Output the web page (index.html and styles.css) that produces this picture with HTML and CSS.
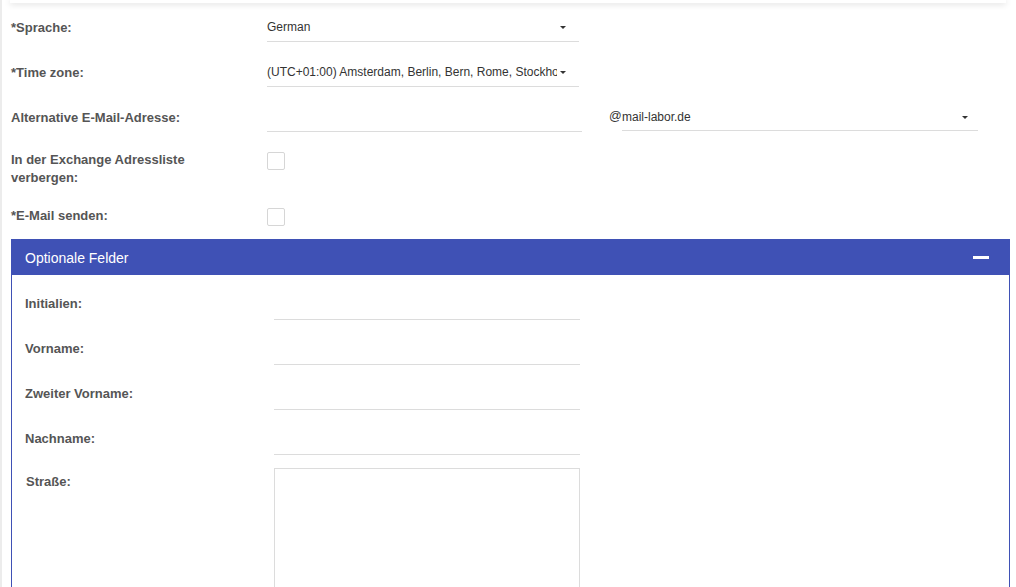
FILE: index.html
```html
<!DOCTYPE html>
<html lang="de">
<head>
<meta charset="utf-8">
<title>Benutzer</title>
<link rel="stylesheet" href="styles.css">
</head>
<body>
<div class="page">
  <div class="topcard"></div>
  <div class="form">
    <div class="row row-first">
      <label class="lbl">*Sprache:</label>
      <div class="select w312"><span class="val">German</span><span class="caret"></span></div>
    </div>
    <div class="row">
      <label class="lbl">*Time zone:</label>
      <div class="select w312"><span class="val">(UTC+01:00) Amsterdam, Berlin, Bern, Rome, Stockholm, Vienna</span><span class="caret"></span></div>
    </div>
    <div class="row">
      <label class="lbl">Alternative E-Mail-Adresse:</label>
      <div class="input w315"></div>
      <span class="at">@</span>
      <div class="select w356 sel-domain"><span class="val">mail-labor.de</span><span class="caret"></span></div>
    </div>
    <div class="row row-check row-exchange">
      <label class="lbl lbl-multi"><span class="wrap">In der Exchange Adressliste verbergen:</span></label>
      <span class="check"></span>
    </div>
    <div class="row row-check row-mail">
      <label class="lbl lbl-multi">*E-Mail senden:</label>
      <span class="check"></span>
    </div>
  </div>
  <section class="panel">
    <div class="panel-head">
      <span class="panel-title">Optionale Felder</span>
      <span class="minus"></span>
    </div>
    <div class="panel-body">
      <div class="prow">
        <label class="plbl">Initialien:</label>
        <div class="input w306"></div>
      </div>
      <div class="prow">
        <label class="plbl">Vorname:</label>
        <div class="input w306"></div>
      </div>
      <div class="prow">
        <label class="plbl">Zweiter Vorname:</label>
        <div class="input w306"></div>
      </div>
      <div class="prow">
        <label class="plbl">Nachname:</label>
        <div class="input w306"></div>
      </div>
      <div class="prow prow-area">
        <label class="plbl plbl-area">Straße:</label>
        <div class="textarea w306"></div>
      </div>
    </div>
  </section>
</div>
</body>
</html>
```

FILE: styles.css
```css
* { box-sizing: border-box; }
html, body {
  margin: 0;
  padding: 0;
  background: #fff;
  overflow: hidden;
}
body {
  font-family: Arial, "Liberation Sans", Helvetica, sans-serif;
  color: #333;
}
.page {
  border-left: 2px solid #ececec;
  min-height: 100vh;
}
.topcard {
  height: 3px;
  margin: 0 10px 0 8px;
  background: #fff;
  box-shadow: 0 1px 6px rgba(0, 0, 0, 0.18);
}
.form {
  padding-left: 9px;
}
.row {
  display: flex;
  align-items: flex-start;
  margin-bottom: 15px;
}
.row-first { margin-top: 9px; }
.lbl {
  width: 256px;
  height: 30px;
  padding-top: 1px;
  flex: none;
  font-size: 13px;
  font-weight: bold;
  color: #555;
  line-height: 30px;
}
.select, .input {
  height: 30px;
  border-bottom: 1px solid #dcdcdc;
  flex: none;
}
.select {
  display: flex;
  align-items: center;
  font-size: 12px;
  color: #333;
  padding-top: 1px;
  padding-right: 13px;
}
.select .val {
  flex: 1;
  min-width: 0;
  overflow: hidden;
  white-space: nowrap;
  margin-right: 3px;
}
.caret {
  flex: none;
  width: 0;
  height: 0;
  border-left: 3px solid transparent;
  border-right: 3px solid transparent;
  border-top: 3.5px solid #333;
  margin-top: 1px;
}
.w312 { width: 312px; }
.w315 { width: 315px; }
.w356 { width: 356px; }
.w306 { width: 306px; }
.at {
  font-size: 12.5px;
  color: #333;
  margin-left: 27px;
  line-height: 29px;
  width: 13px;
}
.sel-domain {
  height: 29px;
  padding-right: 10px;
}
.sel-domain .val { margin-right: 5px; }
.row-check { margin-bottom: 0; }
.row-exchange { margin-top: 19px; }
.row-mail { margin-top: 20px; }
.lbl-multi {
  line-height: 18px;
  height: auto;
  padding-top: 0;
}
.wrap {
  display: block;
  max-width: 200px;
}
.check {
  width: 18px;
  height: 18px;
  border: 1px solid #d6d6d6;
  border-radius: 2px;
  background: #fff;
  margin-top: 1px;
  flex: none;
}
.panel {
  margin: 13px 6px 0 9px;
  border-left: 1px solid #3f51b5;
  border-right: 1px solid #3f51b5;
}
.panel-head {
  height: 36px;
  background: #3f51b5;
  display: flex;
  align-items: center;
  justify-content: space-between;
  padding: 1px 21px 0 13px;
  color: #fff;
  margin: 0 -1px;
}
.panel-title {
  font-size: 14px;
  padding-left: 1px;
}
.minus {
  width: 16px;
  height: 3px;
  background: #fff;
}
.panel-body {
  padding: 15px 0 0 13px;
}
.prow {
  display: flex;
  align-items: flex-start;
  margin-bottom: 15px;
}
.plbl {
  width: 249px;
  flex: none;
  font-size: 13px;
  font-weight: bold;
  color: #555;
  line-height: 28px;
}
.prow-area { margin-top: -2px; }
.plbl-area {
  line-height: 18px;
  padding-top: 5px;
  padding-left: 1px;
}
.textarea {
  height: 140px;
  border: 1px solid #dcdcdc;
  background: #fff;
  flex: none;
}
```
